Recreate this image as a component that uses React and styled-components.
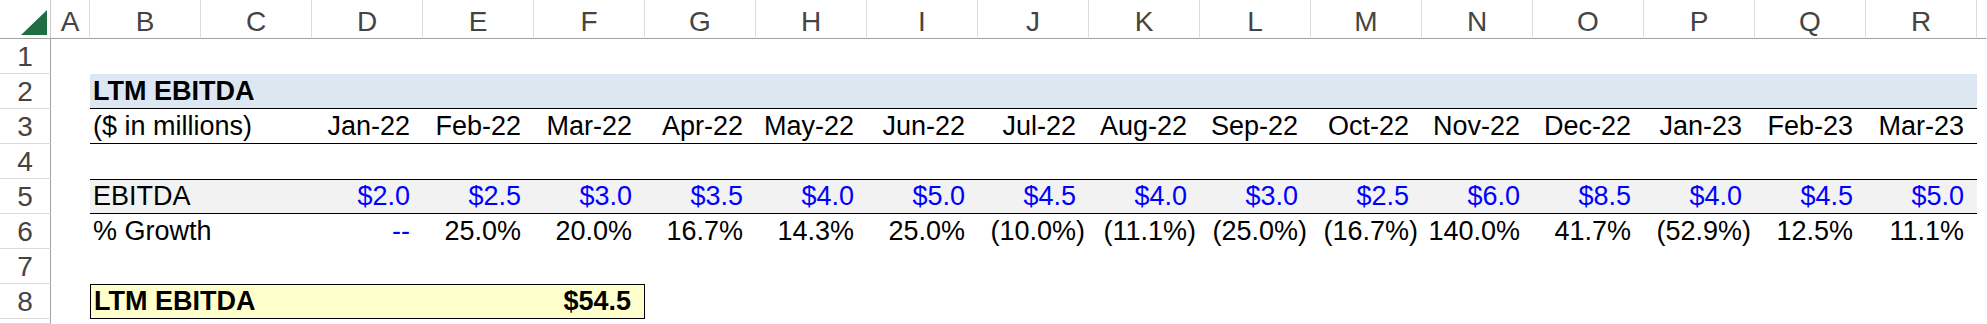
import React from 'react';
import styled, { createGlobalStyle } from 'styled-components';

const GlobalStyle = createGlobalStyle`
  html, body {
    margin: 0;
    padding: 0;
    background: #fff;
  }
  body {
    font-family: "Liberation Sans", Arial, sans-serif;
    overflow: hidden;
  }
`;

const LETTERS = 'ABCDEFGHIJKLMNOPQR'.split('');
const MONTHS = [
  'Jan-22', 'Feb-22', 'Mar-22', 'Apr-22', 'May-22', 'Jun-22', 'Jul-22', 'Aug-22',
  'Sep-22', 'Oct-22', 'Nov-22', 'Dec-22', 'Jan-23', 'Feb-23', 'Mar-23',
];
const EBITDA = [2.0, 2.5, 3.0, 3.5, 4.0, 5.0, 4.5, 4.0, 3.0, 2.5, 6.0, 8.5, 4.0, 4.5, 5.0];

const BLUE = '#0000ff';
const BAND_BLUE = '#dde7f1';
const BAND_GRAY = '#f2f2f2';
const TOTAL_FILL = '#ffffcc';

// Excel-ish "_)" padding: an invisible paren keeps positives aligned with (negatives)
const Pad = styled.span`
  visibility: hidden;
`;

const Sheet = styled.div`
  display: grid;
  grid-template-columns: 51px 39px repeat(17, 111px) 1fr;
  grid-template-rows: 39px repeat(8, 35px) 1fr;
  width: 1987px;
  height: 324px;
  overflow: hidden;
  font-family: "Liberation Sans", Arial, sans-serif;
  font-size: 27px;
  color: #000;
`;

const Corner = styled.div`
  display: flex;
  align-items: flex-end;
  justify-content: flex-end;
  padding: 0 3px 3px 0;
  border-right: 1px solid #c8c8c8;
  border-bottom: 1px solid #a0a0a0;
  box-sizing: border-box;
`;

const ColHeader = styled.div`
  display: flex;
  align-items: flex-end;
  justify-content: center;
  padding-bottom: 2px;
  box-sizing: border-box;
  border-right: 1px solid ${p => (p.$last ? 'transparent' : '#dcdcdc')};
  border-bottom: 1px solid #a0a0a0;
  color: #444;
  font-size: 28px;
  line-height: 28px;
`;

const RowHeader = styled.div`
  display: flex;
  align-items: flex-end;
  justify-content: center;
  padding-bottom: 2px;
  box-sizing: border-box;
  border-right: 1px solid #a0a0a0;
  border-bottom: 1px solid #dcdcdc;
  color: #444;
  font-size: 28px;
  line-height: 28px;
`;

const Cell = styled.div`
  display: flex;
  align-items: flex-end;
  justify-content: ${p => (p.$right ? 'flex-end' : 'flex-start')};
  grid-column: span ${p => p.$span || 1};
  padding: 0 4px ${p => (p.$bottom ? 3 : 4)}px 3px;
  box-sizing: border-box;
  white-space: nowrap;
  line-height: 27px;
  background: ${p => p.$fill || 'transparent'};
  border-top: ${p => (p.$top ? '1px solid #000' : '0')};
  border-bottom: ${p => (p.$bottom ? '1px solid #000' : '0')};
  color: ${p => p.$color || '#000'};
  font-weight: ${p => (p.$bold ? 700 : 400)};
`;

const TotalBox = styled.div`
  grid-column: span 5;
  display: flex;
  align-items: flex-end;
  justify-content: space-between;
  padding: 0 4px 3px 3px;
  box-sizing: border-box;
  background: ${TOTAL_FILL};
  border: 1px solid #000;
  font-weight: 700;
  line-height: 27px;
  white-space: nowrap;
`;

const CornerMark = () => (
  <svg width="26" height="25" viewBox="0 0 26 25">
    <polygon points="0,25 26,25 26,0" fill="#1f6e43" />
  </svg>
);

const fmtMoney = v => `$${v.toFixed(1)}`;

const growth = EBITDA.map((v, i) => (i === 0 ? null : (v / EBITDA[i - 1] - 1) * 100));

const Num = ({ text, padded }) => (
  <span>
    {text}
    {padded && <Pad>)</Pad>}
  </span>
);

const Empty = ({ n }) => Array.from({ length: n }, (_, i) => <Cell key={`e${i}`} />);

const App = () => {
  return (
    <>
      <GlobalStyle />
      <Sheet>
        {/* column headers */}
        <Corner>
          <CornerMark />
        </Corner>
        {LETTERS.map(l => (
          <ColHeader key={l}>{l}</ColHeader>
        ))}
        <ColHeader $last />

        {/* row 1 */}
        <RowHeader>1</RowHeader>
        <Empty n={19} />

        {/* row 2: title bar */}
        <RowHeader>2</RowHeader>
        <Cell />
        <Cell $span={17} $fill={BAND_BLUE} $bottom $bold>
          LTM EBITDA
        </Cell>
        <Cell />

        {/* row 3: units + months */}
        <RowHeader>3</RowHeader>
        <Cell />
        <Cell $bottom>($ in millions)</Cell>
        <Cell $bottom />
        {MONTHS.map(m => (
          <Cell key={m} $right $bottom>
            <Num text={m} padded />
          </Cell>
        ))}
        <Cell />

        {/* row 4 */}
        <RowHeader>4</RowHeader>
        <Empty n={19} />

        {/* row 5: EBITDA */}
        <RowHeader>5</RowHeader>
        <Cell />
        <Cell $fill={BAND_GRAY} $top $bottom>EBITDA</Cell>
        <Cell $fill={BAND_GRAY} $top $bottom />
        {EBITDA.map((v, i) => (
          <Cell key={i} $right $fill={BAND_GRAY} $top $bottom $color={BLUE}>
            <Num text={fmtMoney(v)} padded />
          </Cell>
        ))}
        <Cell />

        {/* row 6: growth */}
        <RowHeader>6</RowHeader>
        <Cell />
        <Cell>% Growth</Cell>
        <Cell />
        {growth.map((g, i) =>
          g === null ? (
            <Cell key={i} $right $color={BLUE}>
              <Num text="--" padded />
            </Cell>
          ) : (
            <Cell key={i} $right>
              {g < 0 ? (
                <Num text={`(${Math.abs(g).toFixed(1)}%)`} />
              ) : (
                <Num text={`${g.toFixed(1)}%`} padded />
              )}
            </Cell>
          )
        )}
        <Cell />

        {/* row 7 */}
        <RowHeader>7</RowHeader>
        <Empty n={19} />

        {/* row 8: LTM total */}
        <RowHeader>8</RowHeader>
        <Cell />
        <TotalBox>
          <span>LTM EBITDA</span>
          <Num text="$54.5" padded />
        </TotalBox>
        <Empty n={13} />

        {/* row 9 is cut off by the window edge: only its header box shows */}
        <RowHeader />
        <Empty n={19} />
      </Sheet>
    </>
  );
};

export default App;
